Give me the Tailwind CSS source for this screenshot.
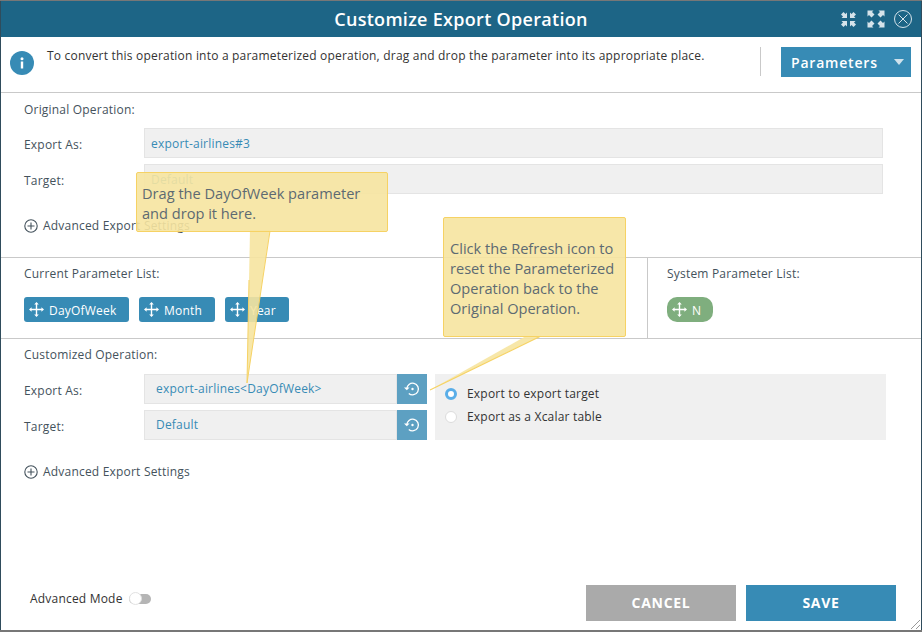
<!DOCTYPE html>
<html>
<head>
<meta charset="utf-8">
<script src="https://cdn.jsdelivr.net/npm/@tailwindcss/browser@4"></script>
</head>
<body class="m-0 w-[922px] h-[632px] overflow-hidden bg-[#2f4c5c] font-['Open_Sans',sans-serif]">
<div class="h-px bg-[#777]"></div>
<div class="relative ml-px w-[920px] h-[629px] bg-white flex flex-col text-[12px] text-[#44525c] tracking-[0.2px]">
  <header class="relative h-9 shrink-0 bg-[#1d6586] flex items-center justify-center">
    <h1 class="text-[18px] font-semibold text-white tracking-[0.3px]">Customize Export Operation</h1>
    <div class="absolute right-[9px] top-[9px] flex items-center gap-[9px] text-[#d5e3ea]">
      <svg class="w-[17px] h-[17px] mr-px" viewBox="0 0 17 17" fill="currentColor"><path d="M7 7H1.500L3 5.500 1 3.500 3.500 1 5.500 3 7 1.500z"/><path d="M10 7h5.500L14 5.500l2-2L13.500 1l-2 2L10 1.500z"/><path d="M7 10H1.500L3 11.500l-2 2L3.500 16l2-2L7 15.500z"/><path d="M10 10h5.500L14 11.500l2 2-2.500 2.500-2-2-1.500 1.500z"/></svg>
      <svg class="w-[18px] h-[18px]" viewBox="0 0 18 18" fill="currentColor"><path d="M.5.500H6.500L5 2l2.500 2.500L4.500 7.500 2 5 .5 6.500z"/><path d="M17.500.500H11.500L13 2l-2.500 2.500 3 3L16 5l1.500 1.500z"/><path d="M.5 17.500H6.500L5 16l2.500-2.500-3-3L2 13 .5 11.500z"/><path d="M17.500 17.500H11.500L13 16l-2.500-2.500 3-3L16 13l1.500-1.500z"/></svg>
      <svg class="w-[18px] h-[18px]" viewBox="0 0 18 18" fill="none" stroke="currentColor" stroke-width="1"><circle cx="9" cy="9" r="8.500"/><path d="M4.500 4.500l9 9M13.500 4.500l-9 9"/></svg>
    </div>
  </header>

  <section class="relative h-[56px] shrink-0 border-b border-[#c9c9c9] flex items-start pl-[9px] pr-[10px]">
    <div class="mt-[14px] w-6 h-6 rounded-full bg-[#378bb5] flex items-center justify-center text-white">
      <svg class="w-6 h-6" viewBox="0 0 24 24" fill="currentColor"><rect x="10.800" y="10.500" width="2.400" height="7"/><circle cx="12" cy="7.800" r="1.500"/></svg>
    </div>
    <p class="ml-[13px] mt-[10px] text-[#333]">To convert this operation into a parameterized operation, drag and drop the parameter into its appropriate place.</p>
    <div class="ml-auto mt-[10px] flex">
      <div class="h-[29px] border-l border-[#c9c9c9] w-[21px]"></div>
      <button class="w-[130px] h-[30px] bg-[#378bb5] text-white text-[14px] font-semibold tracking-[0.8px] flex items-center justify-between pl-[10px] pr-[7px]">
        <span>Parameters</span>
        <span class="block w-0 h-0 border-l-[5px] border-r-[5px] border-t-[6px] border-l-transparent border-r-transparent border-t-[#cfe2ec]"></span>
      </button>
    </div>
  </section>

  <section class="h-[165px] shrink-0 border-b border-[#c9c9c9] pl-[23px] pr-[38px]">
    <div class="mt-[8px] h-[17px] leading-[17px]">Original Operation:</div>
    <div class="mt-[10px] flex items-center h-[30px]">
      <label class="w-[120px] pt-[3px]">Export As:</label>
      <div class="flex-1 h-[30px] bg-[#f0f0f0] border border-[#e4e4e4] pl-[6px] leading-[28px] pt-px text-[#378bb5]">export-airlines#3</div>
    </div>
    <div class="mt-[6px] flex items-center h-[30px]">
      <label class="w-[120px] pt-[3px]">Target:</label>
      <div class="flex-1 h-[30px] bg-[#f0f0f0] border border-[#e4e4e4] pl-[6px] leading-[28px] pt-px text-[#378bb5]">Default</div>
    </div>
    <div class="mt-[23px] flex items-center gap-[5px] h-[18px]">
      <svg class="w-[14px] h-[14px]" viewBox="0 0 14 14" fill="none" stroke="#44525c" stroke-width="1.100"><circle cx="7" cy="7" r="6.200"/><path d="M7 3.500v7M3.500 7h7"/></svg>
      <span>Advanced Export Settings</span>
    </div>
  </section>

  <section class="h-[81px] shrink-0 border-b border-[#c9c9c9] flex">
    <div class="w-[647px] pl-[23px] border-r border-[#c9c9c9]">
      <div class="mt-[7px] h-[17px] leading-[17px]">Current Parameter List:</div>
      <div class="mt-[15px] flex gap-[10px] text-white">
        <div class="h-[25px] w-[105px] rounded-[3px] bg-[#378bb5] flex items-center pl-[5px] gap-[5px]">
          <svg class="w-[15px] h-[15px]" viewBox="0 0 15 15" fill="currentColor"><path d="M7.500 0L9.800 2.600H8.200V6.800H12.400V5.200L15 7.500 12.400 9.800V8.200H8.200V12.400H9.800L7.500 15 5.200 12.400H6.800V8.200H2.600V9.800L0 7.500 2.600 5.200V6.800H6.800V2.600H5.200Z"/></svg>
          <span class="pt-[2px]">DayOfWeek</span>
        </div>
        <div class="h-[25px] w-[76px] rounded-[3px] bg-[#378bb5] flex items-center pl-[5px] gap-[5px]">
          <svg class="w-[15px] h-[15px]" viewBox="0 0 15 15" fill="currentColor"><path d="M7.500 0L9.800 2.600H8.200V6.800H12.400V5.200L15 7.500 12.400 9.800V8.200H8.200V12.400H9.800L7.500 15 5.200 12.400H6.800V8.200H2.600V9.800L0 7.500 2.600 5.200V6.800H6.800V2.600H5.200Z"/></svg>
          <span class="pt-[2px]">Month</span>
        </div>
        <div class="h-[25px] w-[64px] rounded-[3px] bg-[#378bb5] flex items-center pl-[5px] gap-[5px]">
          <svg class="w-[15px] h-[15px]" viewBox="0 0 15 15" fill="currentColor"><path d="M7.500 0L9.800 2.600H8.200V6.800H12.400V5.200L15 7.500 12.400 9.800V8.200H8.200V12.400H9.800L7.500 15 5.200 12.400H6.800V8.200H2.600V9.800L0 7.500 2.600 5.200V6.800H6.800V2.600H5.200Z"/></svg>
          <span class="pt-[2px]">Year</span>
        </div>
      </div>
    </div>
    <div class="pl-[19px]">
      <div class="mt-[7px] h-[17px] leading-[17px]">System Parameter List:</div>
      <div class="mt-[15px] h-[25px] w-[46px] rounded-[10px] bg-[#7fae7e] text-white flex items-center pl-[5px] gap-[5px]">
        <svg class="w-[15px] h-[15px]" viewBox="0 0 15 15" fill="currentColor"><path d="M7.500 0L9.800 2.600H8.200V6.800H12.400V5.200L15 7.500 12.400 9.800V8.200H8.200V12.400H9.800L7.500 15 5.200 12.400H6.800V8.200H2.600V9.800L0 7.500 2.600 5.200V6.800H6.800V2.600H5.200Z"/></svg>
        <span class="pt-[2px]">N</span>
      </div>
    </div>
  </section>

  <section class="flex-1 pl-[23px] relative flex flex-col">
    <div class="mt-[7px] h-[17px] leading-[17px]">Customized Operation:</div>
    <div class="mt-[11px] flex">
      <div class="w-[120px] flex flex-col gap-[6px]">
        <label class="h-[30px] leading-[34px]">Export As:</label>
        <label class="h-[30px] leading-[34px]">Target:</label>
      </div>
      <div class="w-[283px] flex flex-col gap-[6px]">
        <div class="h-[30px] flex">
          <div class="flex-1 bg-[#f0f0f0] border border-[#e4e4e4] pl-[11px] leading-[27px] text-[#378bb5]">export-airlines&lt;DayOfWeek&gt;</div>
          <div class="w-[30px] bg-[#5da0c2] flex items-center justify-center">
            <svg class="w-[16px] h-[16px]" viewBox="0 0 16 16" fill="none" stroke="#fff" stroke-width="1.300"><path d="M2.800 8a5.800 5.800 0 1 1 2 4.400"/><path d="M0 6.500l2.800 2.700 2.800-2.700" stroke="none" fill="#fff"/><circle cx="8.500" cy="8" r="1.200" fill="#fff" stroke="none"/></svg>
          </div>
        </div>
        <div class="h-[30px] flex">
          <div class="flex-1 bg-[#f0f0f0] border border-[#e4e4e4] pl-[11px] leading-[27px] text-[#378bb5]">Default</div>
          <div class="w-[30px] bg-[#5da0c2] flex items-center justify-center">
            <svg class="w-[16px] h-[16px]" viewBox="0 0 16 16" fill="none" stroke="#fff" stroke-width="1.300"><path d="M2.800 8a5.800 5.800 0 1 1 2 4.400"/><path d="M0 6.500l2.800 2.700 2.800-2.700" stroke="none" fill="#fff"/><circle cx="8.500" cy="8" r="1.200" fill="#fff" stroke="none"/></svg>
          </div>
        </div>
      </div>
      <div class="ml-[8px] w-[451px] h-[66px] bg-[#f0f0f0] pl-[10px] text-[#333] flex flex-col">
        <div class="mt-[11px] h-[17px] flex items-center">
          <span class="w-3 h-3 rounded-full bg-white border-[3px] border-[#5aaee8] mt-[1px]"></span>
          <span class="ml-[10px]">Export to export target</span>
        </div>
        <div class="mt-[6px] h-[17px] flex items-center">
          <span class="w-3 h-3 rounded-full bg-white border border-[#dcdcdc] mt-[1px]"></span>
          <span class="ml-[10px]">Export as a Xcalar table</span>
        </div>
      </div>
    </div>
    <div class="mt-[23px] flex items-center gap-[5px] h-[18px]">
      <svg class="w-[14px] h-[14px]" viewBox="0 0 14 14" fill="none" stroke="#44525c" stroke-width="1.100"><circle cx="7" cy="7" r="6.200"/><path d="M7 3.500v7M3.500 7h7"/></svg>
      <span>Advanced Export Settings</span>
    </div>
    <div class="mt-auto mb-[9px] -ml-[23px] pl-[29px] pr-[25px] flex items-center justify-between h-[36px]">
      <div class="flex items-center gap-[6px] text-[#333] -mt-[8px]">
        <span>Advanced Mode</span>
        <span class="relative block w-[22px] h-[10px] rounded-full bg-[#b5b5b5]"><span class="absolute left-0 top-[-2px] w-[13px] h-[13px] rounded-full bg-white border border-[#e2e2e2]"></span></span>
      </div>
      <div class="flex gap-[10px]">
        <button class="w-[150px] h-[36px] pb-[2px] bg-[#aaaaaa] text-white text-[14px] font-bold tracking-[0.7px]">CANCEL</button>
        <button class="w-[150px] h-[36px] pb-[2px] bg-[#378bb5] text-white text-[14px] font-bold tracking-[0.7px]">SAVE</button>
      </div>
    </div>
  </section>

  <svg class="absolute right-[1px] bottom-[1px] w-[9px] h-[9px]" viewBox="0 0 9 9" stroke="#999" stroke-width="1"><path d="M0 9L9 0M5 9l4-4"/></svg>

  <svg class="absolute left-[-1px] top-[-1px] w-[922px] h-[632px] pointer-events-none" viewBox="0 0 922 632">
    <path d="M250 230L247 383L270 230Z" fill="#f6e4a0" fill-opacity=".9"/>
    <path d="M270 231L247 383L249 280" fill="none" stroke="#f6d264" stroke-width="1"/>
    <path d="M526 336L430 390L541 336Z" fill="#f6e4a0" fill-opacity=".9"/>
    <path d="M541 336L430 390" fill="none" stroke="#f6d264" stroke-width="1.200"/>
  </svg>
  <div class="absolute left-[135px] top-[171px] w-[252px] h-[60px] bg-[#f6e4a0]/90 border border-[#f6d264] rounded-[2px] px-[5px] pt-[10px] text-[14.600px] tracking-normal leading-[20px] text-[#5d6a72]">Drag the DayOfWeek parameter and drop it here.</div>
  <div class="absolute left-[442px] top-[216px] w-[183px] h-[120px] bg-[#f6e4a0]/90 border border-[#f6d264] rounded-[2px] px-[6px] pt-[20px] text-[14.600px] tracking-normal leading-[20px] text-[#5d6a72]">Click the Refresh icon to reset the Parameterized Operation back to the Original Operation.</div>
</div>
<div class="h-[2px] bg-[#777]"></div>
</body>
</html>
